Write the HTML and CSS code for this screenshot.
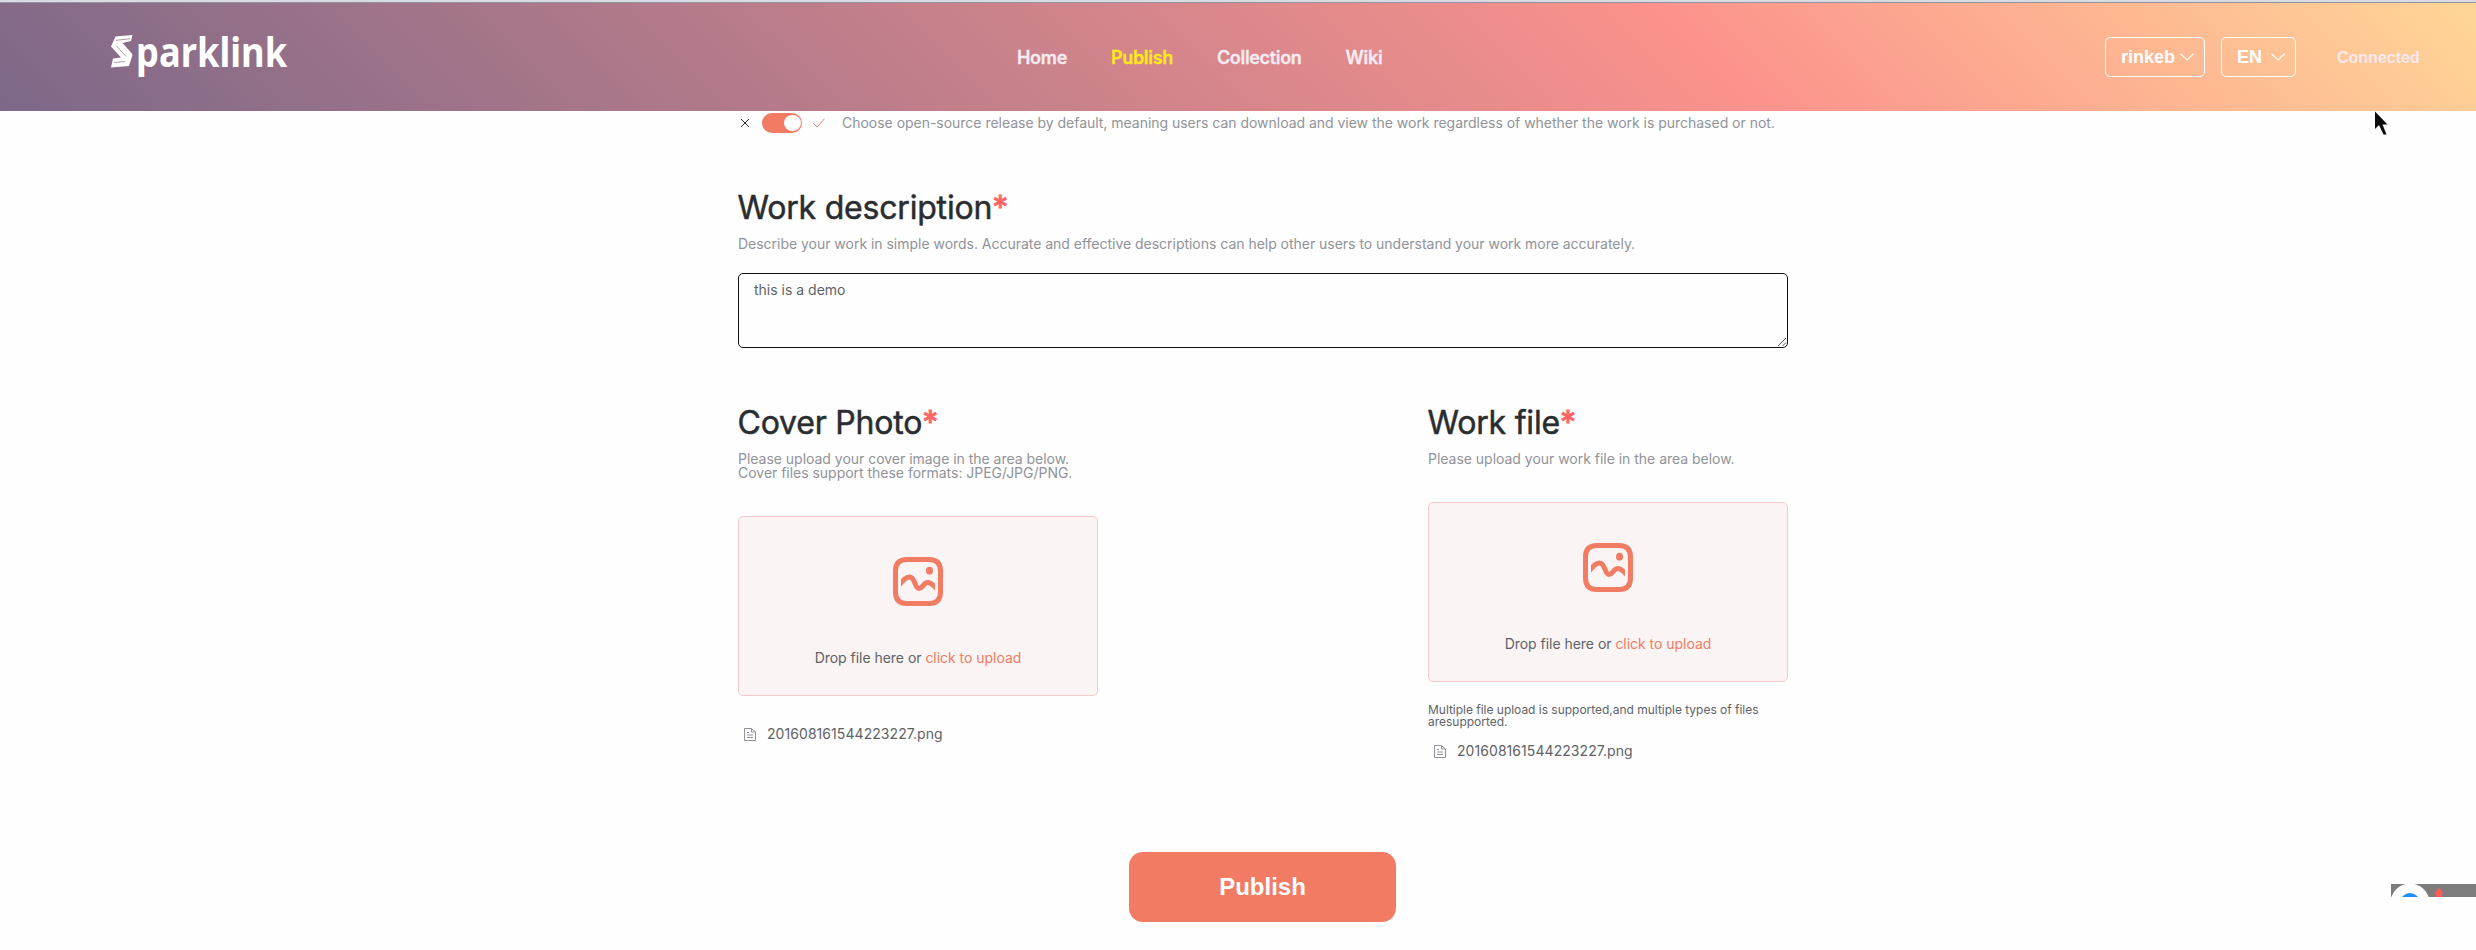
FILE: index.html
```
<!DOCTYPE html>
<html lang="en">
<head>
<meta charset="utf-8">
<title>Sparklink</title>
<link rel="stylesheet" href="styles.css">
</head>
<body>
<svg class="defs" width="0" height="0">
  <symbol id="picture" viewBox="0 0 50 49">
    <path d="M14 2.500H36Q47.500 2.500 47.500 14V35Q47.500 46.500 36 46.500H14Q2.500 46.500 2.500 35V14Q2.500 2.500 14 2.500Z" fill="none" stroke="currentColor" stroke-width="5"/>
    <svg x="8" y="0" width="34" height="49" viewBox="8 0 34 49">
      <path d="M5 29.500C10 23 13 20 16.500 20C22.500 20 21.500 31.500 26 31.500C29.500 31.500 30.500 25.500 35 25.500C38.500 25.500 41 29 45 33" fill="none" stroke="currentColor" stroke-width="5"/>
    </svg>
    <ellipse cx="36.500" cy="13.700" rx="3.500" ry="3.900" fill="currentColor"/>
  </symbol>
  <symbol id="doc" viewBox="0 0 12 13">
    <path d="M.5.5H7.500L11.500 4V12.500H.5ZM7.500.5V4H11.500M3 4.500H5M3 7H9M3 9.500H9" fill="none" stroke="currentColor"/>
  </symbol>
  <symbol id="chevron" viewBox="0 0 14 8">
    <path d="M.5.7 7 7 13.500.7" fill="none" stroke="currentColor" stroke-width="1.200"/>
  </symbol>
</svg>

<header class="header">
  <div class="logo">
    <svg class="logo-mark" viewBox="0 0 22 33" width="22" height="33">
      <path d="M4.500 1.500 21.500 0 20 6 11.500 8 20.500 18 21.500 20 18 31 0 32.500 2 23.500 10 22.500 0 11.500Z" fill="#fff"/>
      <path d="M5 5.300 19 3.800M5.500 11 15 21.500M3 27.500 14 26.500" fill="none" stroke="#a88ea4" stroke-width=".9"/>
    </svg>
    <span class="logo-text">parklink</span>
  </div>
  <nav class="nav">
    <a class="nav-item">Home</a>
    <a class="nav-item active">Publish</a>
    <a class="nav-item">Collection</a>
    <a class="nav-item">Wiki</a>
  </nav>
  <div class="account">
    <div class="select network"><span>rinkeb</span><svg width="14" height="8"><use href="#chevron"/></svg></div>
    <div class="select language"><span>EN</span><svg width="14" height="8"><use href="#chevron"/></svg></div>
    <span class="status">Connected</span>
  </div>
</header>

<main class="content">
  <div class="release">
    <svg class="off" width="10" height="10" viewBox="0 0 10 10"><path d="M1 1 9 9M9 1 1 9" fill="none" stroke="#303133"/></svg>
    <span class="switch"><span class="knob"></span></span>
    <svg class="on" width="12" height="10" viewBox="0 0 12 10"><path d="M.5 5.500 4 9 11.500.7" fill="none" stroke="#f17b63"/></svg>
    <span class="hint choose">Choose open-source release by default, meaning users can download and view the work regardless of whether the work is purchased or not.</span>
  </div>

  <section class="description">
    <h2 class="title">Work description<span class="star">*</span></h2>
    <p class="hint">Describe your work in simple words. Accurate and effective descriptions can help other users to understand your work more accurately.</p>
    <div class="textarea">this is a demo
      <svg class="grip" width="10" height="10" viewBox="0 0 10 10"><path d="M1 9 9 1M5.500 9 9 5.500" fill="none" stroke="#555"/></svg>
    </div>
  </section>

  <div class="uploads">
    <section class="upload">
      <h2 class="title">Cover Photo<span class="star">*</span></h2>
      <p class="hint">Please upload your cover image in the area below.<br>Cover files support these formats: JPEG/JPG/PNG.</p>
      <div class="dropzone">
        <svg width="50" height="49"><use href="#picture"/></svg>
        <p class="drop-text">Drop file here or <em class="link">click to upload</em></p>
      </div>
      <div class="file"><svg width="12" height="13"><use href="#doc"/></svg><span>201608161544223227.png</span></div>
    </section>
    <section class="upload">
      <h2 class="title">Work file<span class="star">*</span></h2>
      <p class="hint">Please upload your work file in the area below.</p>
      <div class="dropzone">
        <svg width="50" height="49"><use href="#picture"/></svg>
        <p class="drop-text">Drop file here or <em class="link">click to upload</em></p>
      </div>
      <p class="tip">Multiple file upload is supported,and multiple types of files aresupported.</p>
      <div class="file second"><svg width="12" height="13"><use href="#doc"/></svg><span>201608161544223227.png</span></div>
    </section>
  </div>

  <button class="publish">Publish</button>
</main>

<svg class="widget" width="85" height="13" viewBox="0 0 85 13">
  <path d="M0 0H85V13H0Z" fill="#7d7d7d"/>
  <circle cx="19" cy="19" r="19.500" fill="#fff"/>
  <circle cx="19" cy="19" r="10" fill="#1e90f5"/>
  <path d="M48 4 53 9.500H51V13H45V9.500H43Z" fill="#ff5c5c"/>
</svg>
<svg class="cursor" width="14" height="25" viewBox="0 0 14 25">
  <path d="M0 .500V18L4 14 8.500 23.500H11.500L7.500 13.500H12.500Z" fill="#0b0b0b"/>
</svg>
</body>
</html>
```
FILE: styles.css
```
* { box-sizing: border-box; }
body {
  margin: 0;
  height: 950px;
  overflow: hidden;
  position: relative;
  background: #fefefe;
  font-family: Inter, "Liberation Sans", sans-serif;
}
h2, p { margin: 0; }
.defs { position: absolute; }

.header {
  height: 111px;
  border-top: 2px solid #d8dce2;
  box-shadow: inset 0 1px #92939f;
  background: linear-gradient(45deg, #7c6888 0%, #fb928c 68%, #ffd697 100%);
  display: grid;
  grid-template-columns: 1017px 1fr 371px;
}
.logo { display: flex; align-items: flex-start; padding: 33px 0 0 111px; }
.logo-mark { flex: none; }
.logo-text {
  margin-left: 3px;
  font: 700 41px/41px "Noto Sans", sans-serif;
  color: #fff;
  transform: scaleX(.885);
  transform-origin: 0 0;
  margin-top: -4px;
}
.nav { display: flex; gap: 44px; padding-top: 45px; }
.nav-item {
  font-size: 18px;
  line-height: 22px;
  font-weight: 600;
  letter-spacing: -.32px;
  color: #f6ebf3;
  -webkit-text-stroke: .3px currentColor;
}
.nav-item.active { color: #ffe81a; }

.account {
  display: flex;
  align-items: flex-start;
  padding-top: 35px;
  font-family: "Liberation Sans", sans-serif;
  font-weight: 700;
  color: #fff;
}
.select {
  height: 40px;
  border: 1px solid #fff;
  border-radius: 5px;
  display: flex;
  align-items: center;
  justify-content: space-between;
  padding: 0 10px 0 15px;
  font-size: 18px;
}
.network { width: 100px; }
.language { width: 75px; margin-left: 16px; }
.status { margin-left: 41px; font-size: 16px; line-height: 42px; color: #f7e9f0; }

.content { width: 1050px; margin-left: 738px; }
.release { display: flex; align-items: center; height: 20px; margin-top: 2px; }
.off { margin-left: 2px; }
.switch {
  width: 40px;
  height: 20px;
  margin-left: 12px;
  padding: 2px 1px;
  border-radius: 10px;
  background: #f17b63;
  display: flex;
  justify-content: flex-end;
}
.knob { width: 17px; height: 16px; border-radius: 50%; background: #fff; }
.on { margin-left: 11px; }
.choose { margin-left: 17px; white-space: nowrap; }
.hint { font-size: 14px; line-height: 14px; letter-spacing: -.022px; color: #909399; }

.title {
  font-size: 32px;
  line-height: 32px;
  font-weight: 400;
  letter-spacing: -.2px;
  text-indent: -.5px;
  color: #2a2d30;
  -webkit-text-stroke: .5px currentColor;
}
.star { color: #ff6464; -webkit-text-stroke: .9px currentColor; }
.description { margin-top: 59px; }
.description .hint { margin-top: 13px; white-space: nowrap; }
.textarea {
  position: relative;
  height: 75px;
  margin-top: 22px;
  padding: 9px 15px;
  border: 1px solid #111;
  border-radius: 5px;
  font-size: 14px;
  line-height: 14px;
  color: #606266;
}
.grip { position: absolute; right: 0; bottom: 0; }

.uploads { display: flex; justify-content: space-between; height: 445px; margin-top: 59px; }
.upload { width: 360px; }
.upload .hint { margin-top: 13px; }
.dropzone {
  height: 180px;
  margin-top: 36px;
  border: 1px solid #f9c9c9;
  border-radius: 5px;
  background: #faf5f4;
  color: #f17b63;
  display: flex;
  flex-direction: column;
  align-items: center;
  padding-top: 40px;
}
.drop-text { margin-top: 43px; font-size: 14px; line-height: 18px; letter-spacing: -.03px; color: #606266; }
.link { font-style: normal; color: #f17b63; }
.tip { margin-top: 22px; font-size: 12px; line-height: 12px; letter-spacing: -.02px; color: #606266; }
.file {
  display: flex;
  align-items: center;
  gap: 11px;
  margin-top: 29px;
  padding-left: 6px;
  font-size: 14px;
  line-height: 18px;
  letter-spacing: .06px;
  color: #606266;
}
.file svg { color: #909399; }
.file.second { margin-top: 14px; }

.publish {
  display: block;
  width: 267px;
  height: 70px;
  margin-left: 391px;
  border: 0;
  border-radius: 14px;
  background: #f17b63;
  color: #fff;
  font: 700 24px "Liberation Sans", sans-serif;
}
.widget { position: absolute; left: 2391px; top: 884px; }
.cursor { position: absolute; left: 2375px; top: 111px; }
```
